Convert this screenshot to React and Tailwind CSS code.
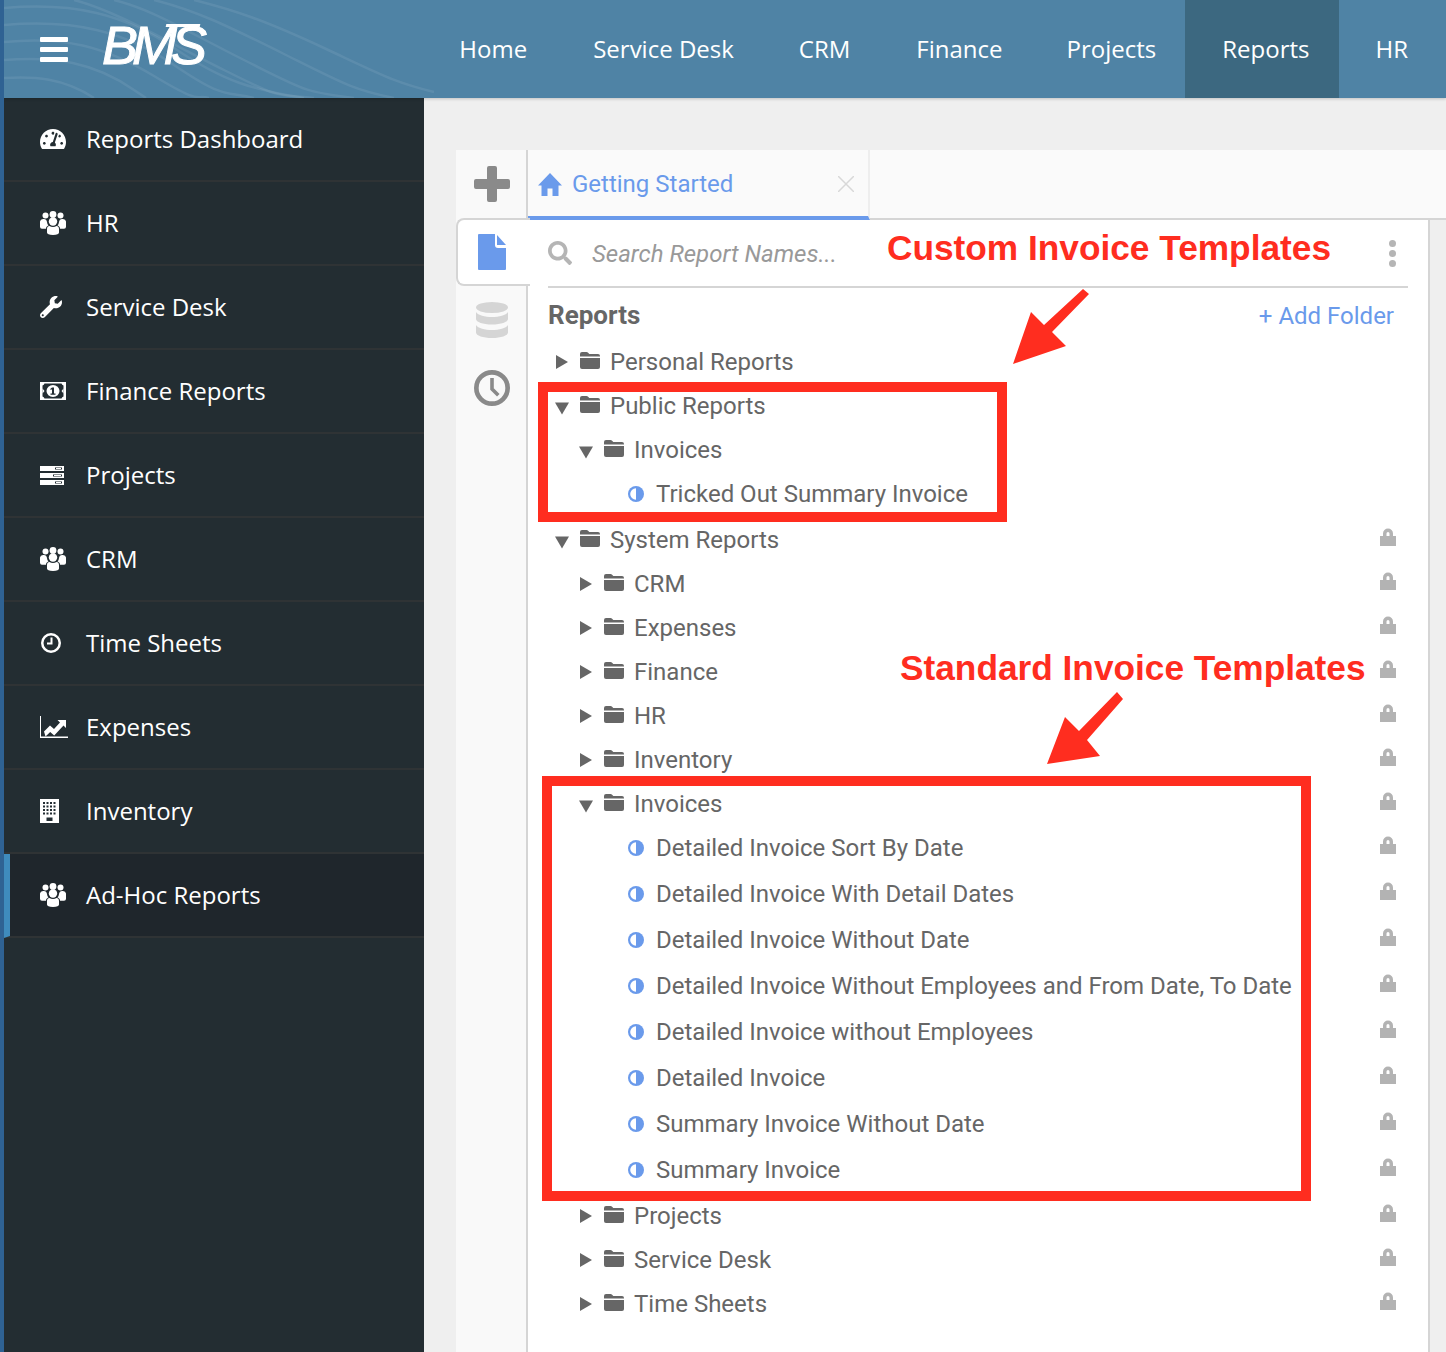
import { FaTachometerAlt, FaWrench, FaSearch } from 'react-icons/fa'

const openSans = "font-['Open_Sans',sans-serif]"

function UsersIcon() {
    return (
        <svg width="26" height="24" viewBox="0 0 26 24" fill="currentColor">
            <circle cx="5.500" cy="4.500" r="3" />
            <circle cx="20.500" cy="4.500" r="3" />
            <circle cx="13" cy="3.400" r="3.400" />
            <circle cx="13" cy="10.500" r="4.200" />
            <path d="M0 12a3.500 3.500 0 0 1 7-1c.2 1.400.6 2.500 1.500 3.500-1.600.5-2.500 1.600-2.500 3.200H2a2 2 0 0 1-2-2z" />
            <path d="M26 12a3.500 3.500 0 0 0-7-1c-.2 1.400-.6 2.500-1.500 3.500 1.600.5 2.500 1.600 2.500 3.200h4a2 2 0 0 0 2-2z" />
            <path d="M7 18c0-1.800 1-3 2.500-3 1 .6 2.100.9 3.500.9s2.500-.3 3.500-.9c1.500 0 2.500 1.200 2.500 3v3.500c0 1.500-2 2.500-6 2.500s-6-1-6-2.500z" />
        </svg>
    )
}

function MoneyIcon() {
    return (
        <svg width="26" height="18" viewBox="0 0 26 18">
            <path fill="currentColor" fillRule="evenodd" d="M0 0h26v18H0zM2.500 3.500a3 3 0 0 0 2-2h17a3 3 0 0 0 2 2v11a3 3 0 0 0-2 2h-17a3 3 0 0 0-2-2z" />
            <ellipse cx="13" cy="9" rx="6.500" ry="6" fill="currentColor" />
            <path d="M12 5.500h2v6h1.500v1.200h-5v-1.200H12V7.200l-1.200.8-.6-1z" fill="#232d33" />
            <path d="M2.500 6.500l2 2.500-2 2.500zM23.500 6.500l-2 2.500 2 2.500z" fill="currentColor" />
        </svg>
    )
}

function ServerIcon() {
    return (
        <svg width="24" height="19" viewBox="0 0 24 19" fill="currentColor">
            <path d="M0 0h24v5H0zM0 7h24v5H0zM0 14h24v5H0z" />
            <path d="M15 1.500h7v2h-7zM13 8.500h9v2h-9zM15 15.500h7v2h-7z" fill="#232d33" />
            <path d="M16 2.100h5v.8h-5zM14 9.100h7v.8h-7zM16 16.100h5v.8h-5z" />
        </svg>
    )
}

function BuildingIcon() {
    return (
        <svg width="19" height="24" viewBox="0 0 19 24">
            <path d="M0 0h19v24H0z" fill="currentColor" />
            <path
                fill="#232d33"
                d="M3 3h2v2H3zM6.500 3h2v2h-2zM10 3h2v2h-2zM13.500 3h2v2h-2zM3 6.500h2v2H3zM6.500 6.500h2v2h-2zM10 6.500h2v2h-2zM13.500 6.500h2v2h-2zM3 10h2v2H3zM6.500 10h2v2h-2zM10 10h2v2h-2zM13.500 10h2v2h-2zM3 13.500h2v2H3zM6.500 13.500h2v2h-2zM10 13.500h2v2h-2zM13.500 13.500h2v2h-2zM6.500 18.500h6V22h-6z"
            />
        </svg>
    )
}

function ClockOutline({ size = 20, stroke = 2.500, hand = 2, d = 'M10.500 4.500v6H6' }) {
    return (
        <svg width={size} height={size} viewBox="0 0 20 20" fill="none" stroke="currentColor">
            <circle cx="10" cy="10" r={10 - stroke / 2} strokeWidth={stroke} />
            <path d={d} strokeWidth={hand} />
        </svg>
    )
}

function ExpensesIcon() {
    return (
        <svg width="28" height="22" viewBox="0 0 28 22" fill="currentColor">
            <path d="M0 0h1v20.500h27.500V22H0z" />
            <path d="M4 15.500l6-6 4 3.500 6-6.500-2.500-2.500H26v8l-2.500-2.500-9.300 10-4-3.600-4.700 4.600z" />
        </svg>
    )
}

function FolderIcon() {
    return (
        <svg width="20" height="17" viewBox="0 0 20 17" fill="currentColor" className="shrink-0">
            <path d="M0 2a2 2 0 0 1 2-2h4.500a2 2 0 0 1 1.600.8L9.300 2H18a2 2 0 0 1 2 2v.6H0z" />
            <path d="M0 6h20v9a2 2 0 0 1-2 2H2a2 2 0 0 1-2-2z" />
        </svg>
    )
}

function HalfCircle() {
    return (
        <svg width="16" height="16" viewBox="0 0 16 16" className="shrink-0">
            <circle cx="8" cy="8" r="8" fill="#6a9aeb" />
            <path d="M8 2.200a5.800 5.800 0 0 0 0 11.600z" fill="#fff" />
        </svg>
    )
}

function LockIcon({ leaf }) {
    return (
        <svg width="16" height="18" viewBox="0 0 16 18" fill="#b3b3b3" className={`shrink-0 ${leaf ? '-mt-[8px]' : '-mt-[6px]'}`}>
            <path fillRule="evenodd" d="M3 8V5.500a5 5 0 0 1 10 0V8h3v10H0V8zM6.500 8h3V5.500a1.500 1.500 0 0 0-3 0z" />
        </svg>
    )
}

function Caret({ open }) {
    return (
        <svg width="14" height="14" viewBox="0 0 14 14" fill="#666666" className={`shrink-0 ${open ? 'mt-[4px]' : ''}`}>
            {open ? <path d="M0 1.500h14L7 13.500z" /> : <path d="M1 0l12 7-12 7z" />}
        </svg>
    )
}

const navItems = [
    { label: 'Home', cls: 'pl-[33px] pr-[33px]' },
    { label: 'Service Desk', cls: 'pl-[33px] pr-[32px]' },
    { label: 'CRM', cls: 'pl-[33px] pr-[33px]' },
    { label: 'Finance', cls: 'pl-[33px] pr-[32px]' },
    { label: 'Projects', cls: 'pl-[32px] pr-[29px]' },
    { label: 'Reports', cls: 'pl-[37px] pr-[30px] bg-[#3c6880]' },
    { label: 'HR', cls: 'pl-[36px] pr-[38px]' },
]

const sideItems = [
    { label: 'Reports Dashboard', icon: <FaTachometerAlt size={26} /> },
    { label: 'HR', icon: <UsersIcon /> },
    { label: 'Service Desk', icon: <FaWrench size={22} /> },
    { label: 'Finance Reports', icon: <MoneyIcon /> },
    { label: 'Projects', icon: <ServerIcon /> },
    { label: 'CRM', icon: <UsersIcon /> },
    { label: 'Time Sheets', icon: <span className="ml-[1px]"><ClockOutline size={20} /></span> },
    { label: 'Expenses', icon: <ExpensesIcon /> },
    { label: 'Inventory', icon: <BuildingIcon /> },
    { label: 'Ad-Hoc Reports', icon: <UsersIcon />, active: true },
]

// level: 0 / 1 folders, 2 leaves
const tree = [
    { label: 'Personal Reports', level: 0 },
    { label: 'Public Reports', level: 0, open: true },
    { label: 'Invoices', level: 1, open: true },
    { label: 'Tricked Out Summary Invoice', level: 2 },
    { label: 'System Reports', level: 0, open: true, lock: true },
    { label: 'CRM', level: 1, lock: true },
    { label: 'Expenses', level: 1, lock: true },
    { label: 'Finance', level: 1, lock: true },
    { label: 'HR', level: 1, lock: true },
    { label: 'Inventory', level: 1, lock: true },
    { label: 'Invoices', level: 1, open: true, lock: true },
    { label: 'Detailed Invoice Sort By Date', level: 2, lock: true },
    { label: 'Detailed Invoice With Detail Dates', level: 2, lock: true },
    { label: 'Detailed Invoice Without Date', level: 2, lock: true },
    { label: 'Detailed Invoice Without Employees and From Date, To Date', level: 2, lock: true },
    { label: 'Detailed Invoice without Employees', level: 2, lock: true },
    { label: 'Detailed Invoice', level: 2, lock: true },
    { label: 'Summary Invoice Without Date', level: 2, lock: true },
    { label: 'Summary Invoice', level: 2, lock: true },
    { label: 'Projects', level: 1, lock: true },
    { label: 'Service Desk', level: 1, lock: true },
    { label: 'Time Sheets', level: 1, lock: true },
]

function TreeRow({ row }) {
    const isLeaf = row.level === 2
    return (
        <div className={`flex items-center justify-between pr-[32px] ${isLeaf ? 'h-[46px]' : 'h-[44px]'}`}>
            {isLeaf ? (
                <div className="-mt-[2px] flex items-center pl-[100px]">
                    <HalfCircle />
                    <span className="ml-[12px]">{row.label}</span>
                </div>
            ) : (
                <div className={`flex items-center ${row.level === 1 ? 'pl-[51px]' : 'pl-[27px]'}`}>
                    <Caret open={row.open} />
                    <span className="-mt-[3px] ml-[11px]"><FolderIcon /></span>
                    <span className="ml-[10px]">{row.label}</span>
                </div>
            )}
            {row.lock && <LockIcon leaf={isLeaf} />}
        </div>
    )
}

export default function App() {
    return (
        <div className="relative flex h-[1352px] w-[1446px] flex-col overflow-hidden border-l-4 border-[#2f6293] bg-[#efefef]">
            {/* top bar */}
            <header className="relative flex h-[98px] shrink-0 items-center justify-between bg-[#4f83a5] shadow-[0_1px_3px_rgba(0,0,0,0.2)]">
                <svg className="absolute left-0 top-0" width="480" height="98" viewBox="0 0 480 98" fill="none" stroke="#ffffff" strokeOpacity="0.08" strokeWidth="2.500">
                    <path d="M0 8c70-6 120 6 170 40s80 42 130 50" />
                    <path d="M0 25c70-6 120 6 170 40s50 26 80 33" />
                    <path d="M0 42c60-6 100 4 150 34s40 18 55 22" />
                    <path d="M0 60c50-4 90 2 130 30l12 8" />
                    <path d="M0 78c30-2 60 0 90 20" />
                    <path d="M70 0c40 10 90 40 150 70s50 24 90 28" />
                    <path d="M110 0c40 10 70 30 130 60s60 32 110 38" />
                    <path d="M150 0c40 10 70 24 130 54s70 36 110 44" />
                    <path d="M190 0c40 10 70 20 130 48s70 34 110 44" />
                </svg>
                <div className="relative flex items-center">
                    <div className="ml-[36px] flex flex-col gap-[5px]">
                        <div className="h-[5px] w-[28px] rounded-[1px] bg-white" />
                        <div className="h-[5px] w-[28px] rounded-[1px] bg-white" />
                        <div className="h-[5px] w-[28px] rounded-[1px] bg-white" />
                    </div>
                    <div className="relative -mt-[8px] ml-[34px] font-['Liberation_Sans',sans-serif] text-[54px] italic leading-none tracking-[-6px] text-white [-webkit-text-stroke:1px_white]">
                        BMS
                        <div className="absolute right-[1px] top-[6px] h-[3px] w-[34px] -skew-x-12 bg-white" />
                    </div>
                </div>
                <nav className={`relative flex h-full items-center text-[24px] text-white ${openSans}`}>
                    {navItems.map((item) => (
                        <div key={item.label} className={`flex h-full items-center ${item.cls}`}>{item.label}</div>
                    ))}
                </nav>
            </header>

            <div className="flex min-h-0 flex-1">
                {/* sidebar */}
                <aside className={`w-[420px] shrink-0 bg-[#232d32] text-[24px] text-white ${openSans}`}>
                    {sideItems.map((item) => (
                        <div
                            key={item.label}
                            className={`flex h-[84px] items-center border-b-2 border-[#2f3335] ${item.active ? 'border-l-[6px] border-l-[#3f8bbd] bg-[#1f262c] pl-[30px]' : 'pl-[36px]'}`}
                        >
                            <span className="flex w-[46px] shrink-0 items-center">{item.icon}</span>
                            <span>{item.label}</span>
                        </div>
                    ))}
                </aside>

                {/* main */}
                <main className="flex min-w-0 flex-1 pl-[32px] pt-[52px]">
                    {/* rail */}
                    <div className="flex w-[72px] shrink-0 flex-col bg-[#f9f9f9] text-[#8a8a8a]">
                        <div className="flex h-[68px] items-center justify-center border-r-2 border-[#d5d5d5]">
                            <svg width="36" height="36" viewBox="0 0 36 36" fill="currentColor" className="ml-[2px]">
                                <path d="M13 2a2 2 0 0 1 2-2h6a2 2 0 0 1 2 2v11h11a2 2 0 0 1 2 2v6a2 2 0 0 1-2 2H23v11a2 2 0 0 1-2 2h-6a2 2 0 0 1-2-2V23H2a2 2 0 0 1-2-2v-6a2 2 0 0 1 2-2h11z" />
                            </svg>
                        </div>
                        <div className="z-10 -mr-[2px] flex h-[68px] items-center justify-center rounded-l-lg border-y-2 border-l-2 border-[#d5d5d5] bg-white">
                            <svg width="28" height="36" viewBox="0 0 28 36" fill="#6a9aeb" className="mr-[4px]">
                                <path d="M0 1a1 1 0 0 1 1-1h16v11a3 3 0 0 0 3 3h8v21a1 1 0 0 1-1 1H1a1 1 0 0 1-1-1z" />
                                <path d="M19 1l9 10h-9z" />
                            </svg>
                        </div>
                        <div className="flex flex-1 flex-col items-center border-r-2 border-[#d5d5d5] pl-[2px]">
                            <div className="flex h-[68px] items-center justify-center">
                                <svg width="32" height="36" viewBox="0 0 32 36" fill="#d5d5d5">
                                    <ellipse cx="16" cy="5.500" rx="16" ry="5.500" />
                                    <path d="M0 10c2 3.500 9 5 16 5s14-1.500 16-5v7c0 3-7 5.500-16 5.500S0 20 0 17z" />
                                    <path d="M0 23c2 3.500 9 5 16 5s14-1.500 16-5v7.500c0 3-7 5.500-16 5.500S0 33.500 0 30.500z" />
                                </svg>
                            </div>
                            <div className="flex h-[68px] items-center justify-center">
                                <ClockOutline size={36} stroke={2.600} hand={2} d="M10 4.500v6l3.500 3.500" />
                            </div>
                        </div>
                    </div>

                    {/* content */}
                    <div className="flex min-w-0 flex-1 flex-col font-['Roboto',sans-serif]">
                        <div className="flex h-[70px] shrink-0 border-b-2 border-[#d5d5d5] bg-[#fafafa]">
                            <div className="-mb-[2px] flex h-[70px] w-[342px] items-center border-b-4 border-r-2 border-[#eeeeee] border-b-[#6a9aeb] pl-[10px] pr-[14px] pt-[2px] text-[24px] text-[#6a9aeb]">
                                <svg width="24" height="23" viewBox="0 0 24 23" fill="currentColor">
                                    <path d="M12 0l12 12.500h-3.500V23h-6v-7.500h-5V23h-6V12.500H0z" />
                                </svg>
                                <span className="ml-[10px] flex-1">Getting Started</span>
                                <svg width="16" height="16" viewBox="0 0 16 16" stroke="#d8d8d8" strokeWidth="1.500">
                                    <path d="M0 0l16 16M16 0L0 16" />
                                </svg>
                            </div>
                        </div>
                        <div className="mr-[16px] flex-1 border-r-2 border-[#d5d5d5] bg-white">
                            <div className="mx-[20px] flex h-[68px] items-center justify-between border-b-2 border-[#d5d5d5]">
                                <div className="flex items-center">
                                    <FaSearch size={24} className="text-[#b5b5b5]" />
                                    <span className="ml-[20px] mt-[2px] text-[24px] italic text-[#999999]">Search Report Names...</span>
                                </div>
                                <div className="mr-[12px] flex flex-col gap-[3px]">
                                    <div className="h-[7px] w-[7px] rounded-full bg-[#b5b5b5]" />
                                    <div className="h-[7px] w-[7px] rounded-full bg-[#b5b5b5]" />
                                    <div className="h-[7px] w-[7px] rounded-full bg-[#b5b5b5]" />
                                </div>
                            </div>
                            <div className="flex h-[52px] items-center justify-between pl-[20px] pr-[34px] pt-[2px]">
                                <span className="text-[26px] font-bold text-[#666666]">Reports</span>
                                <span className="mt-[2px] text-[24px] text-[#6a9aeb]">+ Add Folder</span>
                            </div>
                            <div className="text-[24px] text-[#666666]">
                                {tree.map((row, i) => (
                                    <TreeRow key={i} row={row} />
                                ))}
                            </div>
                        </div>
                    </div>
                </main>
            </div>

            {/* annotations drawn over the screenshot */}
            <div className="absolute left-[534px] top-[382px] h-[140px] w-[469px] border-[10px] border-[#ff2d1f]" />
            <div className="absolute left-[538px] top-[776px] h-[425px] w-[769px] border-[10px] border-[#ff2d1f]" />
            <div className="absolute left-[883px] top-[227px] whitespace-nowrap font-['Liberation_Sans',sans-serif] text-[35.25px] font-bold leading-[42px] text-[#ff2d1f]">Custom Invoice Templates</div>
            <div className="absolute left-[896px] top-[647px] whitespace-nowrap font-['Liberation_Sans',sans-serif] text-[35.25px] font-bold leading-[42px] text-[#ff2d1f]">Standard Invoice Templates</div>
            <svg className="absolute left-0 top-0" width="1446" height="1352" viewBox="4 0 1446 1352" fill="#ff2d1f">
                <path d="M1013 364L1031 312L1044 325L1083 289L1089 294L1052 332L1066 346z" />
                <path d="M1047 764L1065 717L1079 731L1117 692L1123 699L1087 740L1100 756z" />
            </svg>
        </div>
    )
}
